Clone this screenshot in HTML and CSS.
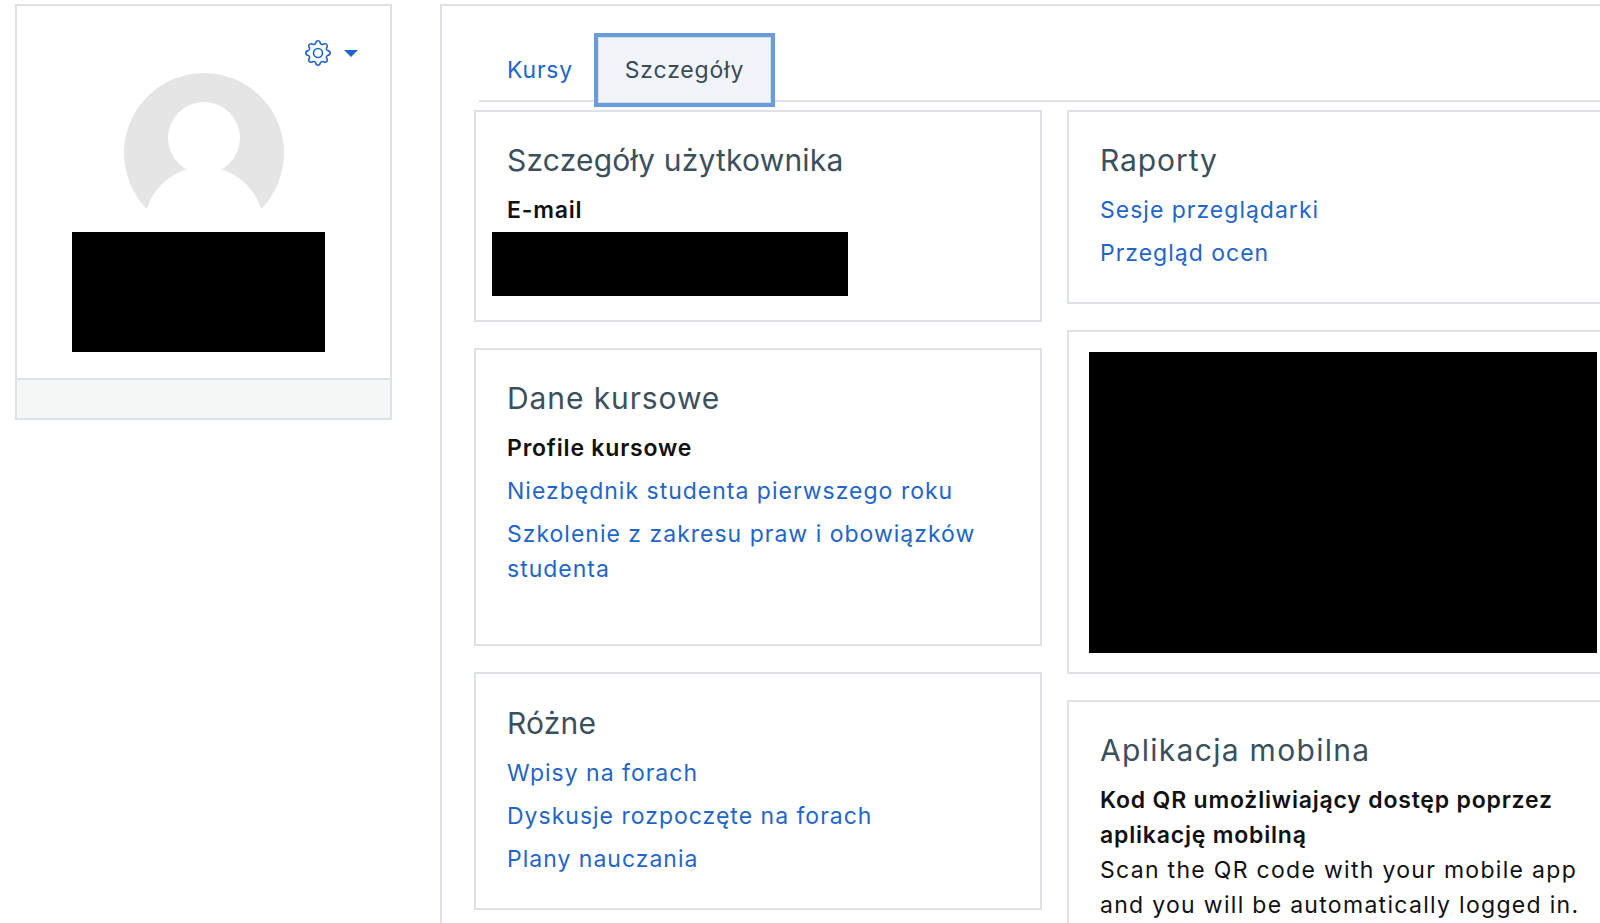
FILE: index.html
```html
<!DOCTYPE html>
<html lang="pl">
<head>
<meta charset="utf-8">
<title>Szczegóły</title>
<link rel="stylesheet" href="styles.css">
</head>
<body>
<div class="page">
  <aside class="profile">
    <div class="profile-body">
      <div class="actions">
        <svg class="gear" viewBox="0 0 16 16" fill="#1f66c8" aria-hidden="true"><path d="M8 4.754a3.246 3.246 0 1 0 0 6.492 3.246 3.246 0 0 0 0-6.492zM5.754 8a2.246 2.246 0 1 1 4.492 0 2.246 2.246 0 0 1-4.492 0z"/><path d="M9.796 1.343c-.527-1.79-3.065-1.79-3.592 0l-.094.319a.873.873 0 0 1-1.255.52l-.292-.16c-1.64-.892-3.433.902-2.54 2.541l.159.292a.873.873 0 0 1-.52 1.255l-.319.094c-1.79.527-1.79 3.065 0 3.592l.319.094a.873.873 0 0 1 .52 1.255l-.16.292c-.892 1.64.901 3.434 2.541 2.54l.292-.159a.873.873 0 0 1 1.255.52l.094.319c.527 1.79 3.065 1.79 3.592 0l.094-.319a.873.873 0 0 1 1.255-.52l.292.16c1.64.893 3.434-.902 2.54-2.541l-.159-.292a.873.873 0 0 1 .52-1.255l.319-.094c1.79-.527 1.79-3.065 0-3.592l-.319-.094a.873.873 0 0 1-.52-1.255l.16-.292c.893-1.64-.902-3.433-2.541-2.54l-.292.159a.873.873 0 0 1-1.255-.52l-.094-.319zm-2.633.283c.246-.835 1.428-.835 1.674 0l.094.319a1.873 1.873 0 0 0 2.693 1.115l.291-.16c.764-.415 1.6.42 1.184 1.185l-.159.292a1.873 1.873 0 0 0 1.116 2.692l.318.094c.835.246.835 1.428 0 1.674l-.319.094a1.873 1.873 0 0 0-1.115 2.693l.16.291c.415.764-.42 1.6-1.185 1.184l-.291-.159a1.873 1.873 0 0 0-2.693 1.116l-.094.318c-.246.835-1.428.835-1.674 0l-.094-.319a1.873 1.873 0 0 0-2.692-1.115l-.292.16c-.764.415-1.6-.42-1.184-1.185l.159-.291A1.873 1.873 0 0 0 1.945 8.93l-.319-.094c-.835-.246-.835-1.428 0-1.674l.319-.094A1.873 1.873 0 0 0 3.06 4.377l-.16-.292c-.415-.764.42-1.6 1.185-1.184l.292.159a1.873 1.873 0 0 0 2.692-1.115l.094-.319z"/></svg>
        <span class="caret"></span>
      </div>
      <div class="avatar-wrap">
        <svg class="avatar" viewBox="0 0 160 160" aria-hidden="true">
          <circle cx="80" cy="80" r="80" fill="#e5e5e5"/>
          <circle cx="80" cy="65" r="36" fill="#fff"/>
          <ellipse cx="80" cy="154" rx="60" ry="60" fill="#fff"/>
        </svg>
      </div>
      <div class="redact redact-name"></div>
    </div>
    <div class="profile-foot"></div>
  </aside>

  <main class="main">
    <nav class="tabs">
      <a class="tab" href="#">Kursy</a>
      <a class="tab tab-active" href="#">Szczegóły</a>
    </nav>
    <div class="columns">
      <div class="column">
        <section class="card card-user">
          <h3>Szczegóły użytkownika</h3>
          <div class="label">E-mail</div>
          <div class="redact redact-mail"></div>
        </section>
        <section class="card card-course">
          <h3>Dane kursowe</h3>
          <div class="label">Profile kursowe</div>
          <a class="link" href="#">Niezbędnik studenta pierwszego roku</a>
          <a class="link" href="#">Szkolenie z zakresu praw i obowiązków studenta</a>
        </section>
        <section class="card card-misc">
          <h3>Różne</h3>
          <a class="link" href="#">Wpisy na forach</a>
          <a class="link" href="#">Dyskusje rozpoczęte na forach</a>
          <a class="link" href="#">Plany nauczania</a>
        </section>
      </div>
      <div class="column">
        <section class="card card-reports">
          <h3>Raporty</h3>
          <a class="link" href="#">Sesje przeglądarki</a>
          <a class="link" href="#">Przegląd ocen</a>
        </section>
        <section class="card card-black">
          <div class="redact redact-block"></div>
        </section>
        <section class="card card-mobile">
          <h3>Aplikacja mobilna</h3>
          <div class="label">Kod QR umożliwiający dostęp poprzez aplikację mobilną</div>
          <p>Scan the QR code with your mobile app and you will be automatically logged in.</p>
        </section>
      </div>
    </div>
  </main>
</div>
</body>
</html>
```
FILE: styles.css
```css
* { box-sizing: border-box; }
html, body { margin: 0; height: 923px; overflow: hidden; background: #fff; }
body { font-family: Inter, "Open Sans", sans-serif; font-size: 23px; line-height: 35px; letter-spacing: 1px; color: #1d2125; }
.page { display: flex; align-items: flex-start; gap: 48px; padding: 4px 0 0 15px; width: 1760px; }

.profile { width: 377px; flex: none; border: 2px solid #dee2e6; }
.profile-body { height: 372px; padding-top: 22px; }
.actions { display: flex; align-items: center; justify-content: flex-end; gap: 13px; height: 50px; padding-right: 32px; }
.gear { width: 26px; height: 26px; display: block; }
.caret { width: 0; height: 0; border-left: 7px solid transparent; border-right: 7px solid transparent; border-top: 7px solid #1f66c8; }
.avatar-wrap { height: 159px; margin: -5px 0 0 107px; overflow: hidden; }
.avatar { width: 160px; height: 160px; display: block; }
.redact { background: #000; }
.redact-name { width: 253px; height: 120px; margin-left: 55px; }
.profile-foot { height: 40px; background: #f6f7f7; border-top: 2px solid #dee2e6; }

.main { width: 1300px; flex: none; height: 1000px; border: 2px solid #dee2e6; border-right: 0; padding: 27px 0 0 32px; }
.tabs { display: flex; height: 69px; margin-left: 5px; border-bottom: 2px solid #dee2e6; }
.tab { display: flex; align-items: center; height: 74px; padding: 0 21px 0 28px; letter-spacing: .8px; color: #1f66c8; text-decoration: none; }
.tab-active { width: 181px; justify-content: center; padding: 0; color: #3c4a55; background: #f0f4f8; border: 4px solid #6a9bdc; box-shadow: inset 0 0 0 1px #d8dde2; }

.columns { display: flex; gap: 25px; margin-top: 8px; }
.column { width: 568px; flex: none; display: flex; flex-direction: column; gap: 26px; }
.card { border: 2px solid #dee2e6; padding: 28px 31px 0; }
.card h3 { margin: 0 0 13px; font-size: 30px; line-height: 40px; font-weight: 400; letter-spacing: .2px; color: #3c4f5c; }
.label { font-weight: 600; letter-spacing: .8px; color: #111; }
.link { display: block; color: #1f66c8; text-decoration: none; margin-bottom: 8px; }
.card p { margin: 0; letter-spacing: 1.3px; color: #111; }

.card-user { height: 212px; }
.redact-mail { width: 356px; height: 64px; margin: 4px 0 0 -15px; }
.card-course { height: 298px; }
.card-course h3 { letter-spacing: .9px; }
.card-course .label { margin-bottom: 8px; }
.card-misc { height: 238px; padding-top: 29px; }
.card-reports { height: 194px; }
.card-reports h3 { letter-spacing: .9px; }
.card-black { height: 344px; padding: 20px 0 0 20px; }
.redact-block { width: 508px; height: 301px; }
.card-mobile { height: 300px; }
.card-mobile h3 { letter-spacing: 1.3px; }
```
